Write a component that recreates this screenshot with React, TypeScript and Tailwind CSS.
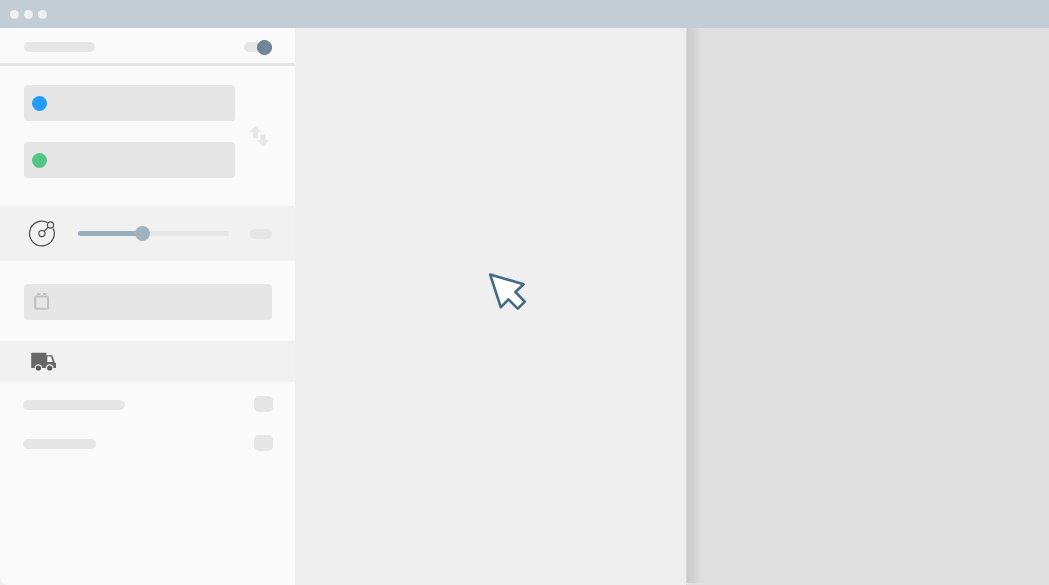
import { useState } from "react";

const SwapIcon = () => (
  <svg viewBox="0 0 20 22" className="h-[22px] w-5" fill="#e6e6e6">
    <path d="M6.2 1 12.2 7.2H9V13H3.8V7.2H.4z" />
    <path d="M11.4 9.4h5.2v5.8H20L14 21.4 8 15.2h3.4z" />
  </svg>
);

const RadiusIcon = () => (
  <svg viewBox="0 0 28 28" className="size-7" fill="none" stroke="#4a4a4a" strokeWidth="1.2">
    <path d="M19.6 2.5A12.4 12.4 0 1 0 25.2 8.4" />
    <circle cx="13.9" cy="13.6" r="3.1" />
    <circle cx="22.5" cy="5" r="3.1" />
    <path d="m16.1 11.4 4.2-4.2" />
  </svg>
);

const CalendarIcon = () => (
  <svg viewBox="0 0 16 18" className="h-[18px] w-4 shrink-0" fill="none" stroke="#c1c1c1">
    <rect x="1.2" y="3.4" width="12.8" height="12.4" rx="0.8" strokeWidth="2" />
    <path d="M3.2 1h3.4M9 1h3.4" strokeWidth="1.8" />
  </svg>
);

const TruckIcon = () => (
  <svg viewBox="0 0 26 20" className="h-5 w-[26px]">
    <path
      d="M.2.8h15.2v2.4h4.8c.7 0 1.1.3 1.4.9l2.2 6.3 1.2.8v4.7H.2z"
      fill="#676767"
    />
    <path d="M16.3 4.4h2.9c.5 0 .7.2.9.6l1.6 4.9h-5.4z" fill="#fafafa" />
    <circle cx="7.4" cy="16" r="3.7" fill="#f1f1f1" />
    <circle cx="18.7" cy="16" r="3.7" fill="#f1f1f1" />
    <circle cx="7.4" cy="16" r="2.6" fill="#5c5c5c" />
    <circle cx="18.7" cy="16" r="2.6" fill="#5c5c5c" />
  </svg>
);

const CursorIcon = () => (
  <svg viewBox="0 0 40 40" className="size-10">
    <path
      d="M3.2 2.6 36.6 12.2 28.4 20 37.8 29.6 30.8 36.6 21.4 27.4 13.8 35.4z"
      fill="#fff"
      stroke="#456a83"
      strokeWidth="2.6"
      strokeLinejoin="round"
    />
  </svg>
);

const places = [
  { name: "Start", dot: "bg-[#229bfb]" },
  { name: "Destination", dot: "bg-[#52c783]" },
];

const options = [
  { name: "First option", width: "w-[102px]" },
  { name: "Second option", width: "w-[73px]" },
];

const App = () => {
  const [radius, setRadius] = useState(42);

  // The thumb is 15px wide, so the filled part ends at its centre
  const fill = `calc(${radius}% + ${7.5 - radius * 0.15}px)`;

  return (
    <div className="flex min-h-screen flex-col bg-[#efefef] font-['Liberation_Sans',sans-serif] text-sm text-gray-700">
      <header className="flex h-7 items-center gap-[5px] bg-[#c3cdd5] px-[10px]">
        <span className="size-[9px] rounded-full bg-[#efefef]" />
        <span className="size-[9px] rounded-full bg-[#efefef]" />
        <span className="size-[9px] rounded-full bg-[#efefef]" />
      </header>

      <div className="flex grow">
        {/* Search panel */}
        <aside className="w-[295px] shrink-0 rounded-bl-lg bg-[#fafafa]">
          <div className="flex h-[38px] items-center justify-between border-b-3 border-[#e6e6e6] pt-[3px] pr-[23px] pl-6">
            <span className="h-[10px] w-[71px] rounded-full bg-[#e6e6e6]" />
            <label className="flex h-[10px] w-7 cursor-pointer items-center rounded-full bg-[#e6e6e6] has-checked:justify-end">
              <input type="checkbox" role="switch" aria-label="Enable" defaultChecked className="sr-only" />
              <span className="size-[15px] shrink-0 rounded-full border border-[#5b748b] bg-[#71869a]" />
            </label>
          </div>

          <div className="flex items-center gap-[14px] pt-[19px] pr-6 pb-7 pl-6">
            <div className="flex w-[211px] flex-col gap-[21px]">
              {places.map((place) => (
                <label key={place.name} className="flex h-9 items-center gap-2 rounded bg-[#e6e6e6] px-2">
                  <span className={`size-[15px] shrink-0 rounded-full ${place.dot}`} />
                  <input type="text" aria-label={place.name} className="min-w-0 grow bg-transparent outline-none" />
                </label>
              ))}
            </div>
            <button type="button" aria-label="Swap places" className="shrink-0 cursor-pointer pt-2">
              <SwapIcon />
            </button>
          </div>

          {/* Radius */}
          <div className="flex h-[55px] items-center bg-[#f1f1f1] pr-[23px] pl-7">
            <RadiusIcon />
            <input
              type="range"
              min={0}
              max={100}
              value={radius}
              onChange={(e) => setRadius(Number(e.target.value))}
              aria-label="Radius"
              className="mr-[21px] ml-[22px] h-[5px] min-w-0 grow cursor-pointer appearance-none rounded-full [&::-webkit-slider-thumb]:size-[15px] [&::-webkit-slider-thumb]:appearance-none [&::-webkit-slider-thumb]:rounded-full [&::-webkit-slider-thumb]:bg-[#9fb3bf]"
              style={{ background: `linear-gradient(to right, #97adbb ${fill}, #e6e6e6 ${fill})` }}
            />
            <span className="h-[10px] w-[22px] rounded-full bg-[#e6e6e6]" />
          </div>

          <div className="pt-[23px] pr-[23px] pb-[21px] pl-6">
            <label className="flex h-9 items-center gap-2 rounded bg-[#e6e6e6] px-[10px]">
              <CalendarIcon />
              <input type="text" aria-label="Date" className="min-w-0 grow bg-transparent outline-none" />
            </label>
          </div>

          <div className="flex h-[41px] items-center bg-[#f1f1f1] px-[31px]">
            <TruckIcon />
          </div>

          <div className="flex flex-col gap-[23px] pt-[14px] pr-[22px] pl-[23px]">
            {options.map((option) => (
              <label key={option.name} className="flex h-4 cursor-pointer items-end justify-between">
                <span className={`mb-[2px] h-[10px] rounded-full bg-[#e6e6e6] ${option.width}`} />
                <input
                  type="checkbox"
                  aria-label={option.name}
                  className="h-4 w-[19px] cursor-pointer appearance-none rounded-[5px] bg-[#e6e6e6] checked:bg-[#9fb3bf]"
                />
              </label>
            ))}
          </div>
        </aside>

        <main className="flex grow items-center justify-center pb-[30px] pl-8">
          <CursorIcon />
        </main>

        {/* Results drawer */}
        <section className="flex w-[363px] shrink-0 border-l border-[#dadada] bg-[#dfdfdf] pb-[2px]">
          <div className="w-[14px] bg-linear-to-r from-[#cbcbcb] via-[#d2d2d2] to-[#dfdfdf]" />
        </section>
      </div>
    </div>
  );
};

export default App;
